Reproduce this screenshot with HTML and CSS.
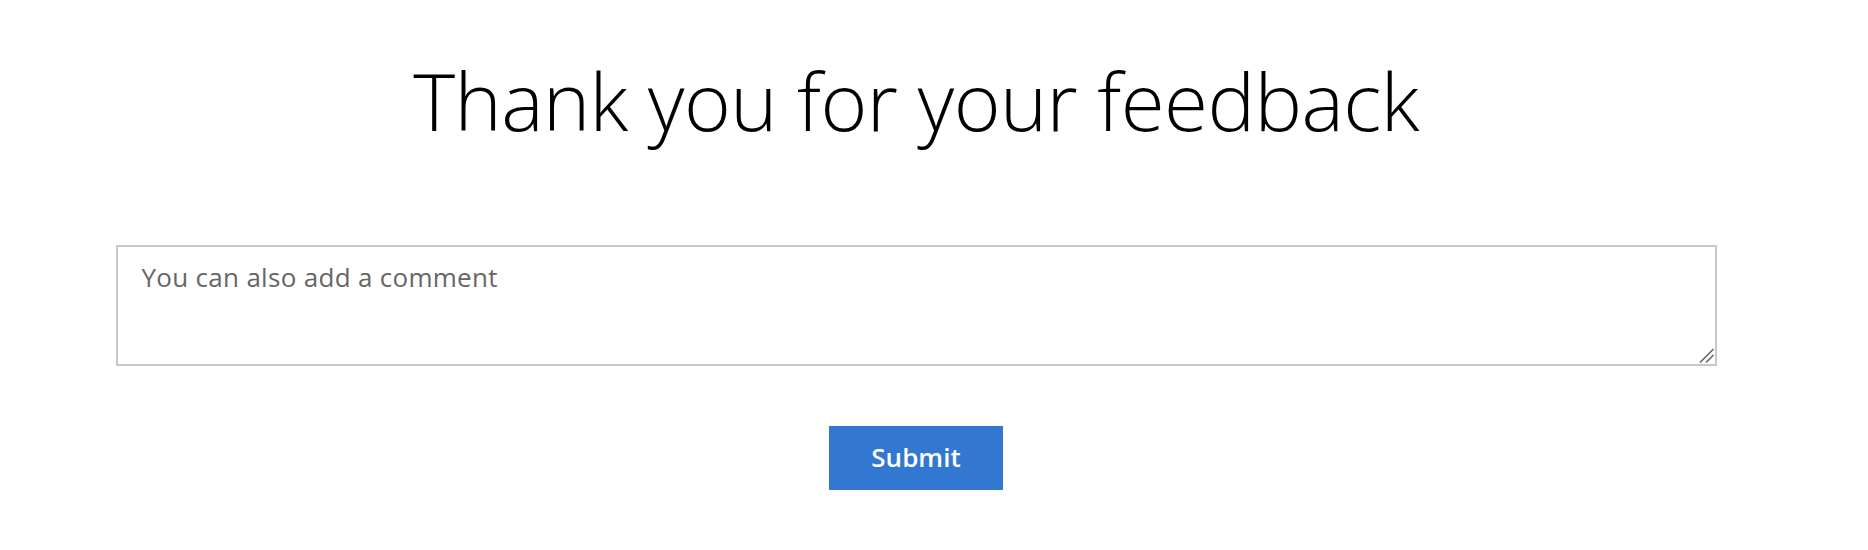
FILE: index.html
```html
<!DOCTYPE html>
<html lang="en">

<head>
    <meta charset="UTF-8">
    <meta name="viewport" content="width=device-width, initial-scale=1.0">
    <title>Feedback</title>
    <link rel="stylesheet" href="styles.css">
</head>

<body>
    <main class="feedback">
        <h1 class="feedback-title">Thank you for your feedback</h1>

        <div class="comment-field">
            <textarea class="comment-box" placeholder="You can also add a comment"></textarea>
            <!-- resize grip drawn over the textarea corner -->
            <svg class="comment-grip" width="16" height="16" viewBox="0 0 16 16" aria-hidden="true">
                <line x1="1" y1="14.5" x2="14.5" y2="1" stroke="#666" stroke-width="1.6" />
                <line x1="7" y1="14.5" x2="14.5" y2="7" stroke="#666" stroke-width="1.6" />
            </svg>
        </div>

        <button class="submit-button" type="button">Submit</button>
    </main>
</body>

</html>
```

FILE: styles.css
```css
body {
    font-family: 'Open Sans', 'Noto Sans', sans-serif;
    background-color: #fff;
    color: #000;
    margin: 0;
    padding: 0;
}

.feedback {
    width: 1832px;
    display: flex;
    flex-direction: column;
    align-items: center;
}

.feedback-title {
    font-size: 80px;
    font-weight: 300;
    letter-spacing: -0.6px;
    line-height: 100px;
    margin: 50px 0 0;
}

.comment-field {
    position: relative;
    width: 1601px;
    margin-top: 95px;
}

.comment-box {
    display: block;
    box-sizing: border-box;
    width: 100%;
    height: 121px;
    padding: 13px 24px;
    border: 2px solid #c8c8c8;
    border-radius: 0;
    font-family: inherit;
    font-size: 26px;
    letter-spacing: 0.3px;
    line-height: 34px;
    color: #333;
    outline: none;
}

.comment-box::placeholder {
    color: #666;
}

.comment-box::-webkit-resizer {
    background: transparent;
}

.comment-grip {
    position: absolute;
    right: 2px;
    bottom: 2px;
    pointer-events: none;
}

.submit-button {
    width: 174px;
    height: 64px;
    margin-top: 60px;
    padding: 0 0 3px;
    border: none;
    background-color: #3277d0;
    color: #fff;
    font-family: inherit;
    font-size: 26px;
    font-weight: 600;
    cursor: pointer;
}
```
